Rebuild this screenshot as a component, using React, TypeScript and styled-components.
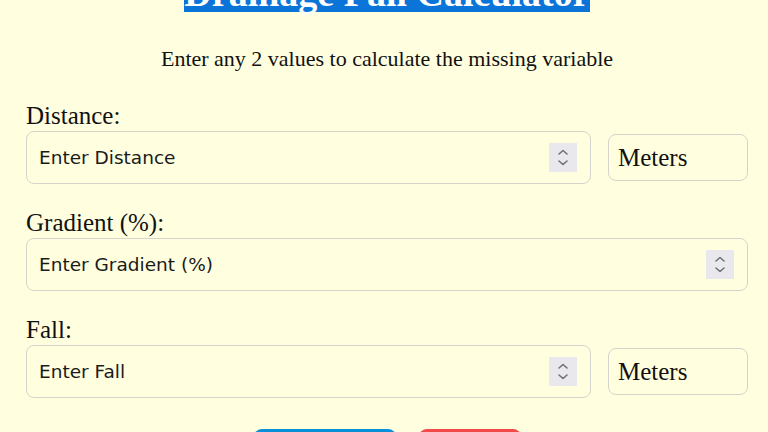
import styled, { createGlobalStyle } from 'styled-components';

const GlobalStyle = createGlobalStyle`
  html, body {
    margin: 0;
    padding: 0;
    background-color: #ffffe0;
    font-family: "Liberation Serif", "Times New Roman", serif;
    color: #111;
  }
`;

type Field = {
  label: string;
  placeholder: string;
  unit?: string;
};

const fields: Field[] = [
  { label: 'Distance:', placeholder: 'Enter Distance', unit: 'Meters' },
  { label: 'Gradient (%):', placeholder: 'Enter Gradient (%)' },
  { label: 'Fall:', placeholder: 'Enter Fall', unit: 'Meters' },
];

const SpinIcon = () => (
  <svg width="28" height="29" viewBox="0 0 28 29">
    <polyline points="10,11 14,7.5 18,11" fill="none" stroke="#6f6f78" strokeWidth="1.6" strokeLinecap="round" strokeLinejoin="round" />
    <polyline points="10,18 14,21.5 18,18" fill="none" stroke="#6f6f78" strokeWidth="1.6" strokeLinecap="round" strokeLinejoin="round" />
  </svg>
);

const App = () => {
  return (
    <>
      <GlobalStyle />
      <Page>
        <Header>
          <Title>
            <TitleText>Drainage Fall Calculator</TitleText>
          </Title>
          <Subtitle>Enter any 2 values to calculate the missing variable</Subtitle>
        </Header>
        <Form>
          {fields.map(f => (
            <Group key={f.label}>
              <Label>{f.label}</Label>
              <InputRow>
                <InputWrap>
                  <NumberInput type="number" placeholder={f.placeholder} />
                  <Spinner>
                    <SpinIcon />
                  </Spinner>
                </InputWrap>
                {f.unit && (
                  <UnitSelect defaultValue={f.unit}>
                    <option>{f.unit}</option>
                    <option>Centimeters</option>
                    <option>Millimeters</option>
                  </UnitSelect>
                )}
              </InputRow>
            </Group>
          ))}
        </Form>
        <Actions>
          <Button $bg="#0a8fd9" $w={142}>Calculate</Button>
          <Button $bg="#f24a4a" $w={102}>Reset</Button>
        </Actions>
      </Page>
    </>
  );
};

const Page = styled.div`
  width: 722px;
  margin-left: 26px;
  display: flex;
  flex-direction: column;
`;

const Header = styled.div`
  display: flex;
  flex-direction: column;
  align-items: center;
  margin-top: -26px;
`;

const Title = styled.h1`
  margin: 0;
  font-size: 38px;
  font-weight: bold;
  line-height: 1;
`;

const TitleText = styled.span`
  display: inline-block;
  background-color: #0b74d8;
  color: #fff;
`;

const Subtitle = styled.p`
  margin: 34px 0 29px;
  font-size: 22px;
`;

const Form = styled.div`
  display: flex;
  flex-direction: column;
  gap: 24px;
`;

const Group = styled.div`
  display: flex;
  flex-direction: column;
`;

const Label = styled.label`
  font-size: 25px;
  line-height: 29px;
  margin-bottom: 1px;
`;

const InputRow = styled.div`
  display: flex;
  align-items: center;
  gap: 17px;
`;

const InputWrap = styled.div`
  position: relative;
  flex: 1;
  min-width: 0;
  display: flex;
`;

const NumberInput = styled.input`
  flex: 1;
  min-width: 0;
  box-sizing: border-box;
  height: 53px;
  padding: 0 50px 0 12px;
  border: 1px solid #d4d4cc;
  border-radius: 8px;
  background: transparent;
  font-family: "DejaVu Sans", Verdana, sans-serif;
  font-size: 18.5px;
  color: #111;
  -moz-appearance: textfield;

  &::placeholder {
    color: #1a1a1a;
    opacity: 1;
  }

  &::-webkit-inner-spin-button,
  &::-webkit-outer-spin-button {
    -webkit-appearance: none;
    margin: 0;
  }

  &:focus {
    outline: none;
  }
`;

const Spinner = styled.span`
  position: absolute;
  right: 14px;
  top: 12px;
  width: 28px;
  height: 29px;
  background-color: #e9e9ed;
  display: flex;
  pointer-events: none;
`;

const UnitSelect = styled.select`
  appearance: none;
  width: 140px;
  box-sizing: border-box;
  height: 47px;
  padding: 0 9px;
  border: 1px solid #d4d4cc;
  border-radius: 8px;
  background: transparent;
  font-family: "Liberation Serif", "Times New Roman", serif;
  font-size: 25px;
  color: #111;
`;

const Actions = styled.div`
  display: flex;
  justify-content: center;
  gap: 23px;
  margin-top: 31px;
`;

const Button = styled.button<{ $bg: string; $w: number }>`
  width: ${p => p.$w}px;
  height: 44px;
  border: none;
  border-radius: 8px;
  background-color: ${p => p.$bg};
  color: #fff;
  font-size: 18px;
  font-family: "DejaVu Sans", Verdana, sans-serif;
  cursor: pointer;
`;

export default App;
